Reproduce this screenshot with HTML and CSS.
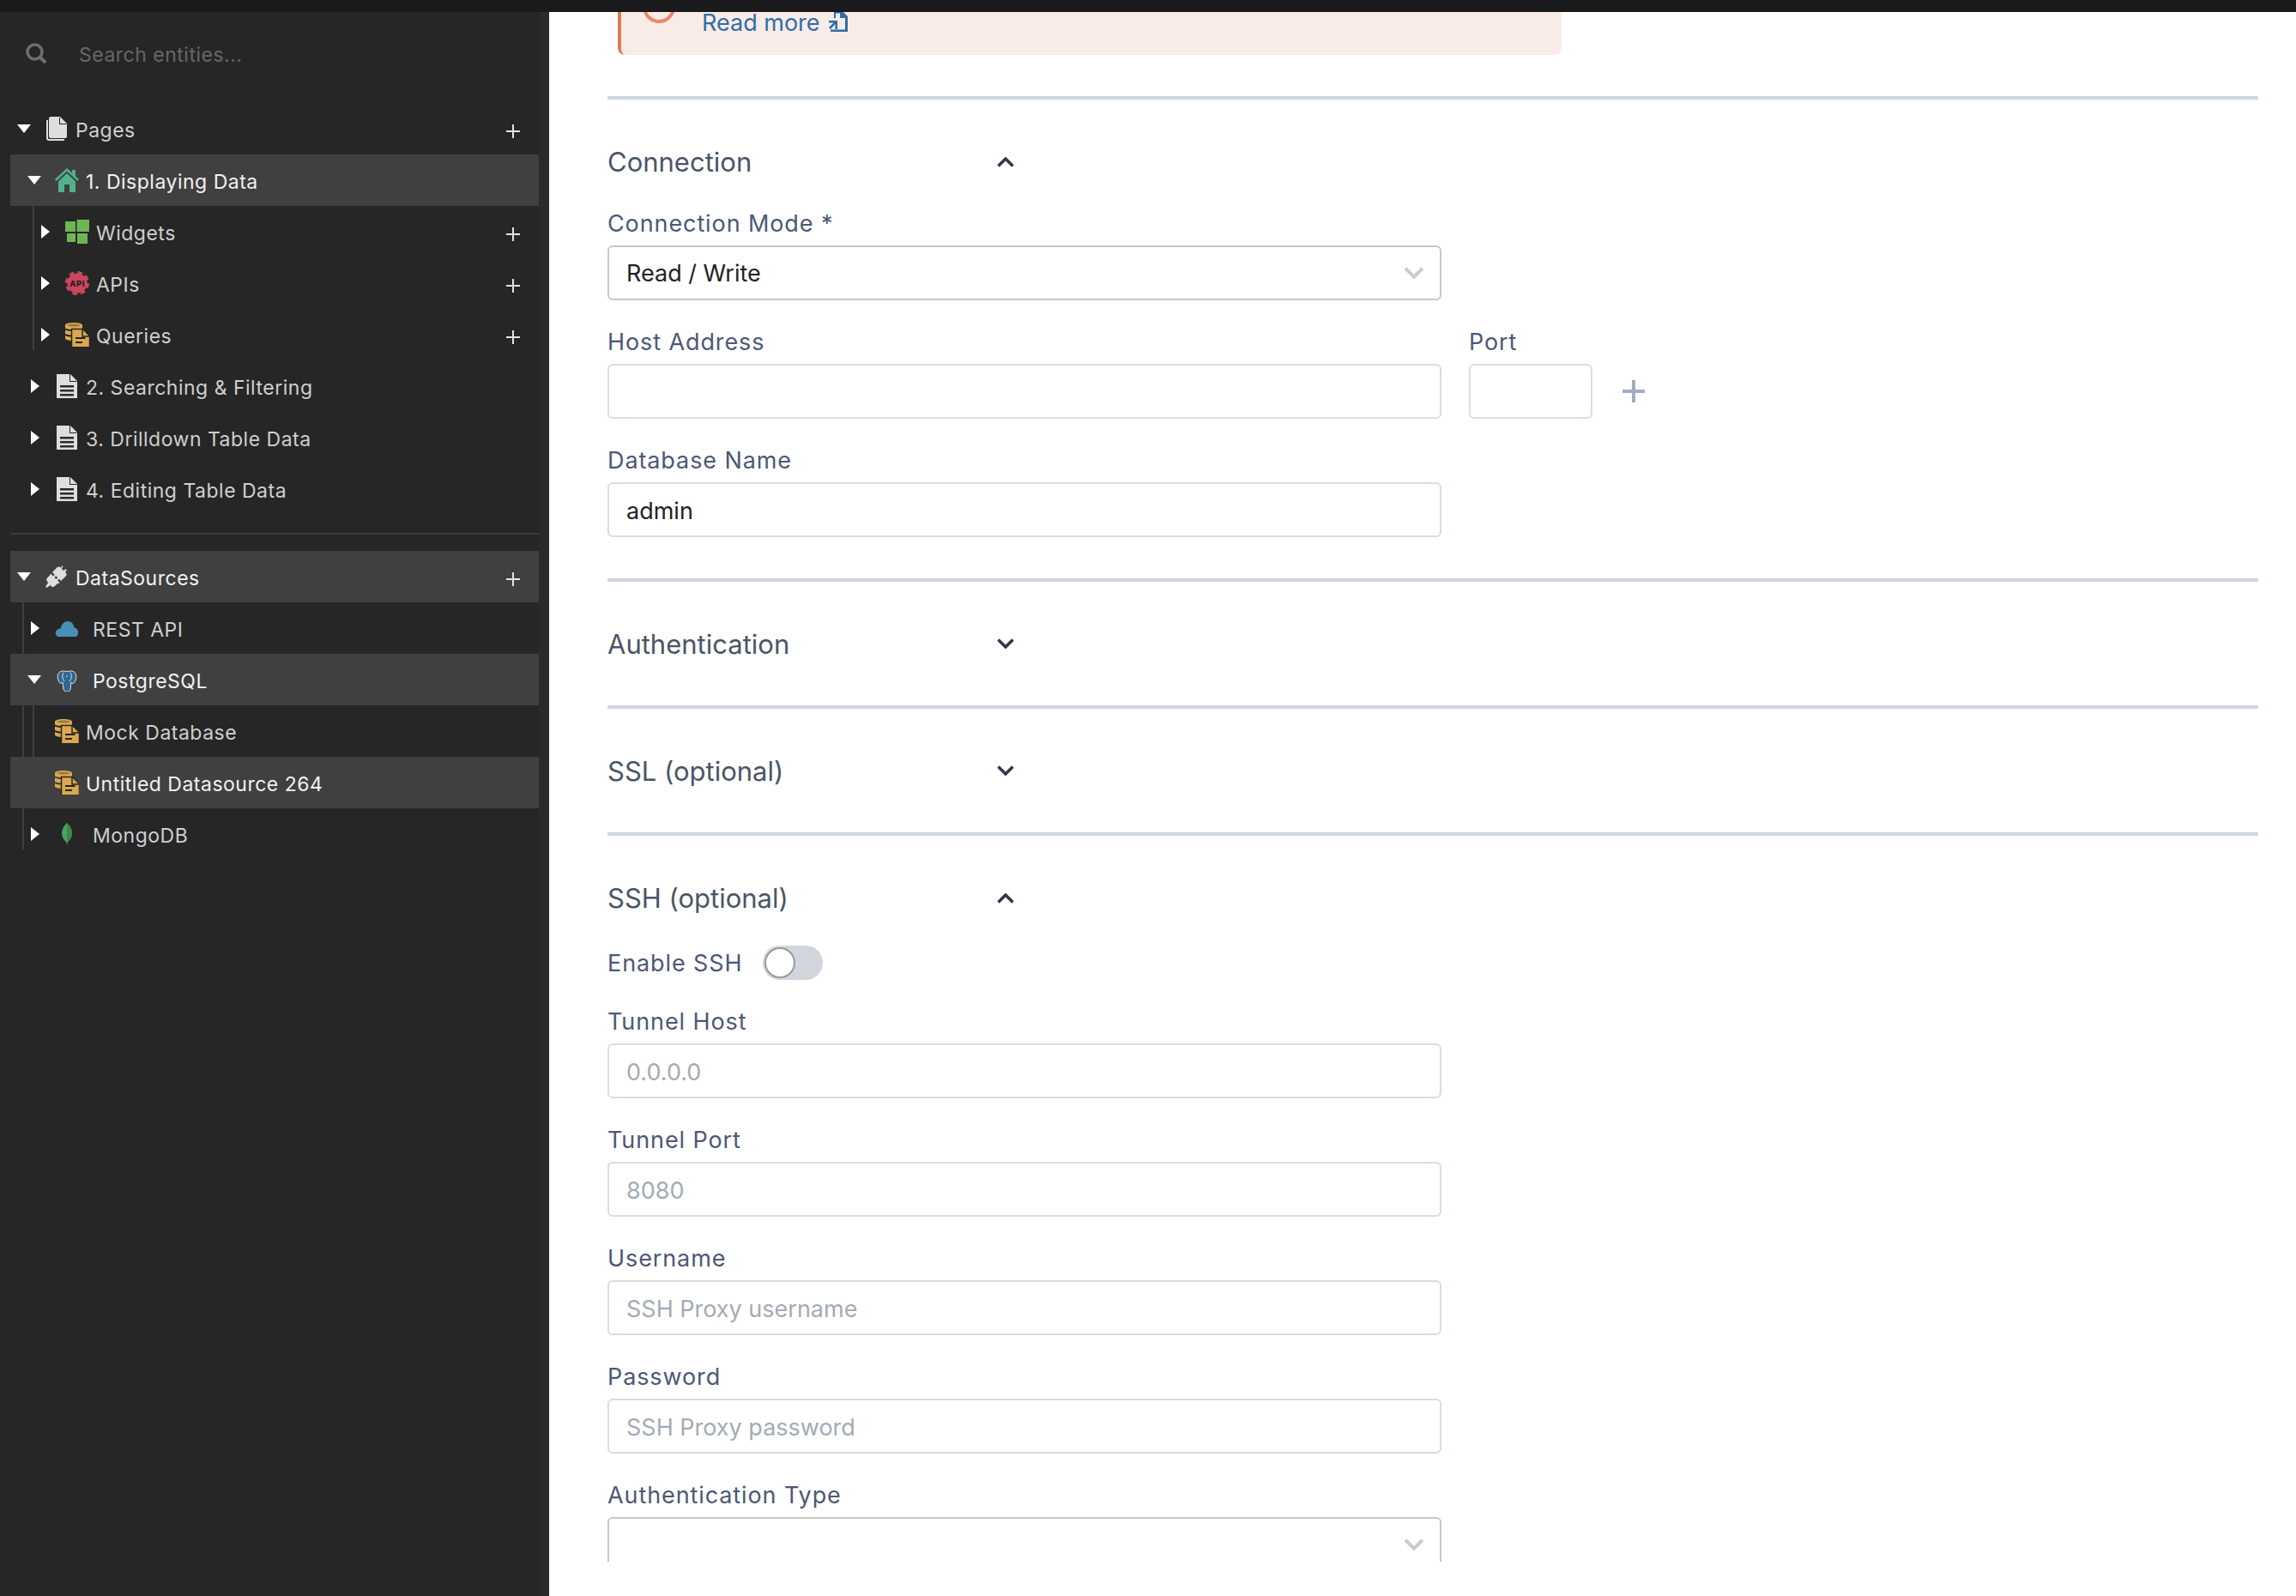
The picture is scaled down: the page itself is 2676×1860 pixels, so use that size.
FILE: index.html
```html
<!DOCTYPE html>
<html lang="en">
<head>
<meta charset="utf-8">
<title>Datasource</title>
<link rel="stylesheet" href="styles.css">
</head>
<body>
<svg class="defs" width="0" height="0" aria-hidden="true">
  <symbol id="doc" viewBox="0 0 24 28"><path fill="#dedede" d="M0 0h16l8 8v20H0z"/><path fill="#262626" d="M16 0v8h8l-1 1h-8V0z"/><path fill="#2b2b2b" d="M4 13h16v2.500H4zM4 18h16v2.500H4zM4 23h16v2.500H4z"/></symbol>
  <symbol id="query" viewBox="0 0 28 28">
    <path fill="#dca84e" d="M0 3c0-2 4.500-3 10-3s10 1 10 3v3.500c-2 1-5.500 1.500-10 1.500S2 7.500 0 6.500zM0 8.500C2.500 9.500 6 10 10 10s7.500-.5 10-1.500V13c-2.500 1-6 1.500-10 1.500S2.500 14 0 13zM0 15c2 1 4.500 1.500 7 1.500V21c-3-.2-5.500-.8-7-2z"/>
    <path fill="#262626" d="M2 3c2-1 5-1.500 8-1.500s6 .5 8 1.500c-2 1-5 1.500-8 1.500S4 4 2 3z" opacity=".35"/>
    <path fill="#dca84e" stroke="#262626" stroke-width="1.500" d="M7.500 7.500h13l8 8V29h-21z"/>
    <path fill="none" stroke="#262626" stroke-width="1.500" d="M20 8v8h8"/>
    <path fill="#262626" d="M12 17h11.500v2H12zM12 22h8v2h-8z"/>
  </symbol>
  <symbol id="tri-r" viewBox="0 0 10 16"><path fill="#fff" d="M0 0l10 8-10 8z"/></symbol>
  <symbol id="tri-d" viewBox="0 0 16 10"><path fill="#fff" d="M0 0h16L8 10z"/></symbol>
  <symbol id="add" viewBox="0 0 16 16"><path fill="none" stroke="#e4e4e4" stroke-width="2" d="M8 0v16M0 8h16"/></symbol>
  <symbol id="chev-d" viewBox="0 0 20 12"><path fill="none" stroke="currentColor" stroke-width="3.500" d="M1.500 1.500L10 10l8.500-8.500"/></symbol>
  <symbol id="chev-u" viewBox="0 0 20 12"><path fill="none" stroke="currentColor" stroke-width="3.500" d="M1.500 10.500L10 2l8.500 8.500"/></symbol>
</svg>

<div class="topbar"></div>
<div class="app">
  <aside class="sidebar">
    <div class="search">
      <svg class="search-ico" viewBox="0 0 24 24"><circle cx="10.500" cy="10.500" r="8.500" fill="none" stroke="#6e6e6e" stroke-width="3.500"/><path d="M16.500 16.500L23 23" stroke="#6e6e6e" stroke-width="4"/></svg>
      <span class="search-text">Search entities...</span>
    </div>

    <div class="tree">
      <div class="row lvl0">
        <svg class="tw twd"><use href="#tri-d"/></svg>
        <svg class="ico pages-ico" viewBox="0 0 24 28"><path fill="none" stroke="#dedede" stroke-width="2" d="M1 4v21c0 1 1 2 2 2h18"/><path fill="#dedede" d="M3 2c0-1 1-2 2-2h11l8 8v15c0 1-1 2-2 2H5c-1 0-2-1-2-2z"/><path fill="#262626" d="M16 1v7h7l1 1h-9V1z"/></svg>
        <span class="label">Pages</span>
        <svg class="add"><use href="#add"/></svg>
      </div>
      <div class="row lvl1 on">
        <svg class="tw twd"><use href="#tri-d"/></svg>
        <svg class="ico" viewBox="0 0 28 28"><path fill="#4fb28c" d="M14 0l6 5.500V2h4v7.200l4 3.800-1.600 2L14 3.400 1.600 15 0 13zM14 6l10 9.500V28h-7v-9h-6v9H4V15.500z"/></svg>
        <span class="label">1. Displaying Data</span>
      </div>
      <div class="group line-38">
        <div class="row lvl2">
          <svg class="tw twr"><use href="#tri-r"/></svg>
          <svg class="ico" viewBox="0 0 28 28"><path fill="#6fb556" d="M0 2h12v12H0zM13.500 0H28v14H13.500zM2 16h10v10H2zM14 16h12v12H14z"/></svg>
          <span class="label">Widgets</span>
          <svg class="add"><use href="#add"/></svg>
        </div>
        <div class="row lvl2">
          <svg class="tw twr"><use href="#tri-r"/></svg>
          <svg class="ico" viewBox="0 0 28 28"><circle cx="14" cy="14" r="11.500" fill="#c9475f"/><circle cx="14" cy="14" r="12.500" fill="none" stroke="#c9475f" stroke-width="3" stroke-dasharray="5.800 4"/><text class="api-text" x="14" y="17.500">API</text></svg>
          <span class="label">APIs</span>
          <svg class="add"><use href="#add"/></svg>
        </div>
        <div class="row lvl2">
          <svg class="tw twr"><use href="#tri-r"/></svg>
          <svg class="ico"><use href="#query"/></svg>
          <span class="label">Queries</span>
          <svg class="add"><use href="#add"/></svg>
        </div>
      </div>
      <div class="row lvl1">
        <svg class="tw twr"><use href="#tri-r"/></svg>
        <svg class="ico"><use href="#doc"/></svg>
        <span class="label">2. Searching &amp; Filtering</span>
      </div>
      <div class="row lvl1">
        <svg class="tw twr"><use href="#tri-r"/></svg>
        <svg class="ico"><use href="#doc"/></svg>
        <span class="label">3. Drilldown Table Data</span>
      </div>
      <div class="row lvl1">
        <svg class="tw twr"><use href="#tri-r"/></svg>
        <svg class="ico"><use href="#doc"/></svg>
        <span class="label">4. Editing Table Data</span>
      </div>

      <div class="tree-divider"></div>

      <div class="row lvl0 on">
        <svg class="tw twd"><use href="#tri-d"/></svg>
        <svg class="ico" viewBox="0 0 26 26"><path fill="#dedede" d="M19 0l1.500 1.500-1.800 2.200 2.300 2.300 2.200-1.800L25 5.500l-2 2.200 1 1c1 1.500.5 3-.5 4L18 18 8 8l5.300-5.500c1-1 2.500-1.500 4-.5l1 1zM6.500 10l2.500 2.500 2.700-2.700 1.500 1.500-2.700 2.700 2 2 2.700-2.700 1.500 1.500-2.700 2.700 2.500 2.500-1.500 1.500-.8-.8-3.500 3.500c-1.500 1-3 1-4.200 0L6 22.800 1.500 26 0 24.500 3.300 20l-1.300-1.300c-1-1.200-1-2.700 0-4.200l3.500-3.500-.5-.5z"/></svg>
        <span class="label">DataSources</span>
        <svg class="add"><use href="#add"/></svg>
      </div>
      <div class="group line-26">
        <div class="row lvl1">
          <svg class="tw twr"><use href="#tri-r"/></svg>
          <svg class="ico" viewBox="0 0 28 28"><path fill="#4a8fb8" d="M2 23c-3-4 0-8.500 4.500-8.500C7.500 9.500 11 6 15 6c4 0 7 3 7.500 7.500 4 .5 6 5 3.500 9.500-.5.500-1 1-2 1H4c-1 0-1.500-.5-2-1z"/></svg>
          <span class="label wide">REST API</span>
        </div>
        <div class="row lvl1 on">
          <svg class="tw twd"><use href="#tri-d"/></svg>
          <svg class="ico" viewBox="0 0 28 28"><path fill="#336791" stroke="#dfe8f0" stroke-width="1" d="M5 5.500C8 3 12 4.500 14 4.500S20 3 23 5.500c3 3 2 8.500-.5 12-1 1.500-2.500 1-3.500-.5L18 25c0 2.500-2.500 3-4 3s-4-.5-4-3L9 17c-1 1.500-2.500 2-3.500.5C3 14 2 8.500 5 5.500z"/><path fill="none" stroke="#dfe8f0" stroke-width="1" d="M10 6c-2 3-1.500 7 1 10M18 6c2 3 1.500 7-1 10M14 9v2"/></svg>
          <span class="label wide">PostgreSQL</span>
        </div>
        <div class="group line-38">
          <div class="row lvl1">
            <span class="tw"></span>
            <svg class="ico"><use href="#query"/></svg>
            <span class="label">Mock Database</span>
          </div>
          <div class="row lvl1 on">
            <span class="tw"></span>
            <svg class="ico"><use href="#query"/></svg>
            <span class="label">Untitled Datasource 264</span>
          </div>
        </div>
        <div class="row lvl1">
          <svg class="tw twr"><use href="#tri-r"/></svg>
          <svg class="ico" viewBox="0 0 28 28"><path fill="#4aa35a" d="M14 1c4 4 6 8 6 12s-2.500 8.500-5.500 10.500h-1C10.500 21.500 8 17 8 13S10 5 14 1z"/><path fill="#3b8a4a" d="M14 1c4 4 6 8 6 12s-2.500 8.500-5.500 10.500H14z"/><path fill="#8a8a80" d="M13.500 22h1l-.2 5h-.6z"/></svg>
          <span class="label wide">MongoDB</span>
        </div>
      </div>
    </div>
  </aside>

  <main class="content">
    <div class="alert">
      <svg class="alert-ico" viewBox="0 0 38 38"><circle cx="19" cy="19" r="17" fill="none" stroke="#e58a6a" stroke-width="4"/><path d="M19 8v14" stroke="#e07b4f" stroke-width="4"/></svg>
      <a class="alert-link">Read more
        <svg class="ext-ico" viewBox="0 0 22 24"><path fill="#2e6fa6" d="M6 0h10l6 6v18H2v-2.500h17V8h-6V2.500H8V8H6z"/><path fill="#2e6fa6" d="M0 11h10v10H7.500v-6L2 21l-2-2 5.500-5.500H0z"/></svg>
      </a>
    </div>

    <section class="section first">
      <header class="sec-head"><h2 class="sec-title">Connection</h2><svg class="chev dark"><use href="#chev-u"/></svg></header>
      <div class="field">
        <label class="lbl">Connection Mode *</label>
        <div class="select"><span>Read / Write</span><svg class="chev light"><use href="#chev-d"/></svg></div>
      </div>
      <div class="field-row">
        <div class="field">
          <label class="lbl">Host Address</label>
          <input class="input" type="text">
        </div>
        <div class="field port">
          <label class="lbl">Port</label>
          <input class="input" type="text">
        </div>
        <svg class="port-add" viewBox="0 0 26 26"><path fill="none" stroke="#a0aec0" stroke-width="4" d="M13 0v26M0 13h26"/></svg>
      </div>
      <div class="field last">
        <label class="lbl">Database Name</label>
        <input class="input" type="text" value="admin">
      </div>
    </section>

    <section class="section">
      <header class="sec-head closed"><h2 class="sec-title">Authentication</h2><svg class="chev dark"><use href="#chev-d"/></svg></header>
    </section>

    <section class="section">
      <header class="sec-head closed"><h2 class="sec-title">SSL (optional)</h2><svg class="chev dark"><use href="#chev-d"/></svg></header>
    </section>

    <section class="section">
      <header class="sec-head"><h2 class="sec-title">SSH (optional)</h2><svg class="chev dark"><use href="#chev-u"/></svg></header>
      <div class="toggle-row">
        <span class="lbl">Enable SSH</span>
        <span class="toggle"><span class="knob"></span></span>
      </div>
      <div class="field">
        <label class="lbl">Tunnel Host</label>
        <input class="input" type="text" placeholder="0.0.0.0">
      </div>
      <div class="field">
        <label class="lbl">Tunnel Port</label>
        <input class="input" type="text" placeholder="8080">
      </div>
      <div class="field">
        <label class="lbl">Username</label>
        <input class="input" type="text" placeholder="SSH Proxy username">
      </div>
      <div class="field">
        <label class="lbl">Password</label>
        <input class="input" type="text" placeholder="SSH Proxy password">
      </div>
      <div class="field">
        <label class="lbl">Authentication Type</label>
        <div class="select"><span></span><svg class="chev light"><use href="#chev-d"/></svg></div>
      </div>
    </section>
  </main>
</div>
</body>
</html>
```

FILE: styles.css
```css
* { box-sizing: border-box; }
html, body { margin: 0; height: 100%; }
body {
  height: 1860px;
  overflow: hidden;
  background: #fff;
  font-family: Inter, "Noto Sans", sans-serif;
  display: flex;
  flex-direction: column;
}
.defs { position: absolute; }
.topbar { height: 14px; flex: none; background: #1a1a1c; }
.app { flex: 1; display: flex; min-height: 0; }

/* Sidebar */
.sidebar {
  width: 640px;
  flex: none;
  background: #262626;
  border-right: 12px solid #2a2a2a;
  padding: 0 0 0 12px;
}
.search { height: 106px; display: flex; align-items: flex-start; padding: 36px 0 0 18px; }
.search-ico { width: 24px; height: 24px; margin-right: 38px; }
.search-text { color: #666; font-size: 23px; line-height: 26px; letter-spacing: .5px; padding-top: 1px; }

.tree { display: flex; flex-direction: column; }
.row {
  position: relative;
  z-index: 1;
  height: 60px;
  display: flex;
  align-items: center;
  color: #cfcfcf;
  font-size: 23px;
  letter-spacing: .5px;
  flex: none;
}
.row.on { background: #404040; color: #f2f2f2; }
.tw { flex: none; width: 16px; height: 16px; }
.twd { height: 10px; }
.twr { height: 16px; }
.ico { flex: none; width: 28px; height: 28px; }
.label { margin-left: 8px; padding-top: 3px; white-space: nowrap; }
.label.wide { margin-left: 16px; }
.add { width: 16px; height: 16px; margin-left: auto; margin-right: 22px; margin-top: 5px; }

.lvl0 { padding-left: 8px; }
.lvl0 .ico { width: 26px; height: 28px; margin-left: 17px; }
.lvl0 .label { margin-left: 9px; }
.lvl1 { padding-left: 20px; }
.lvl1 .twr { margin-left: 1px; }
.lvl1 .twr + .ico { margin-left: 15px; }
.lvl1 .ico { margin-left: 16px; }
.lvl2 { padding-left: 33px; }
.lvl2 .ico { margin-left: 15px; }
.lvl2 .label { margin-left: 8px; }

.group { position: relative; }
.group::before {
  content: "";
  position: absolute;
  top: 0;
  width: 2px;
  background: #3f3f3f;
}
.line-38::before { left: 26px; bottom: 12px; }
.line-26::before { left: 14px; bottom: 12px; }
.line-26 .line-38::before { bottom: 0; }

.tree-divider { height: 2px; background: #3a3a3a; margin: 21px 0 19px; }

/* Content */
.content {
  flex: 1;
  min-width: 0;
  height: 1806px;
  overflow: hidden;
  padding: 0 44px 0 68px;
  color: #4a5568;
}
.alert {
  width: 1100px;
  height: 80px;
  margin: -30px 0 0 12px;
  background: #f9ebe8;
  border-left: 4px solid #e07b4f;
  border-radius: 0 0 8px 8px;
  display: flex;
  padding: 5px 0 0 25px;
}
.alert-ico { width: 38px; height: 38px; flex: none; }
.alert-link {
  margin: 25px 0 0 31px;
  color: #2e6fa6;
  font-size: 27px;
  line-height: 26px;
  height: 26px;
  white-space: nowrap;
  display: flex;
  align-items: center;
  gap: 10px;
}
.ext-ico { width: 22px; height: 24px; margin-top: -4px; }

.section { border-top: 4px solid #cfd6df; }
.section.first { margin-top: 48px; }
.sec-head { display: flex; align-items: center; height: 40px; margin: 53px 0 35px; }
.sec-head.closed { margin-bottom: 51px; }
.sec-head.closed .chev { margin-top: -2px; }
.sec-title { width: 454px; margin: 0; font-size: 31px; font-weight: 400; line-height: 40px; color: #4a5568; }
.chev { width: 20px; height: 12px; flex: none; }
.chev.dark { color: #2d3748; }
.chev.light { color: #ccc; width: 24px; height: 14px; }

.field { width: 972px; margin-bottom: 32px; flex: none; }
.field.last { margin-bottom: 48px; }
.field-row { display: flex; align-items: flex-start; gap: 32px; }
.field.port { width: 144px; }
.port-add { width: 26px; height: 26px; margin: 61px 0 0 3px; flex: none; }
.lbl { display: block; height: 32px; line-height: 34px; margin-bottom: 10px; font-size: 27px; letter-spacing: .9px; color: #4c5876; white-space: nowrap; }
.input, .select {
  display: flex;
  align-items: center;
  width: 100%;
  height: 64px;
  padding: 0 20px;
  border: 2px solid #d5dfe3;
  border-radius: 6px;
  background: #fff;
  font: inherit;
  font-size: 27px;
  color: #222;
  outline: none;
}
.input { padding-top: 3px; }
.input::placeholder { color: #a3abb5; opacity: 1; }
.select { border-color: #c8c8c8; justify-content: space-between; padding-right: 8px; }
.select .chev { margin-right: 10px; }

.toggle-row { display: flex; align-items: center; height: 40px; margin-bottom: 32px; }
.toggle-row .lbl { margin: 0 24px 0 0; }
.toggle { display: block; width: 70px; height: 40px; border-radius: 20px; background: #d1d6dd; padding: 2px 0 0 2px; }
.knob { display: block; width: 36px; height: 36px; border-radius: 50%; background: #fff; border: 2px solid #9a9a9a; }

.api-text { font: 800 9.500px Inter, sans-serif; fill: #2b1a20; text-anchor: middle; }
```
